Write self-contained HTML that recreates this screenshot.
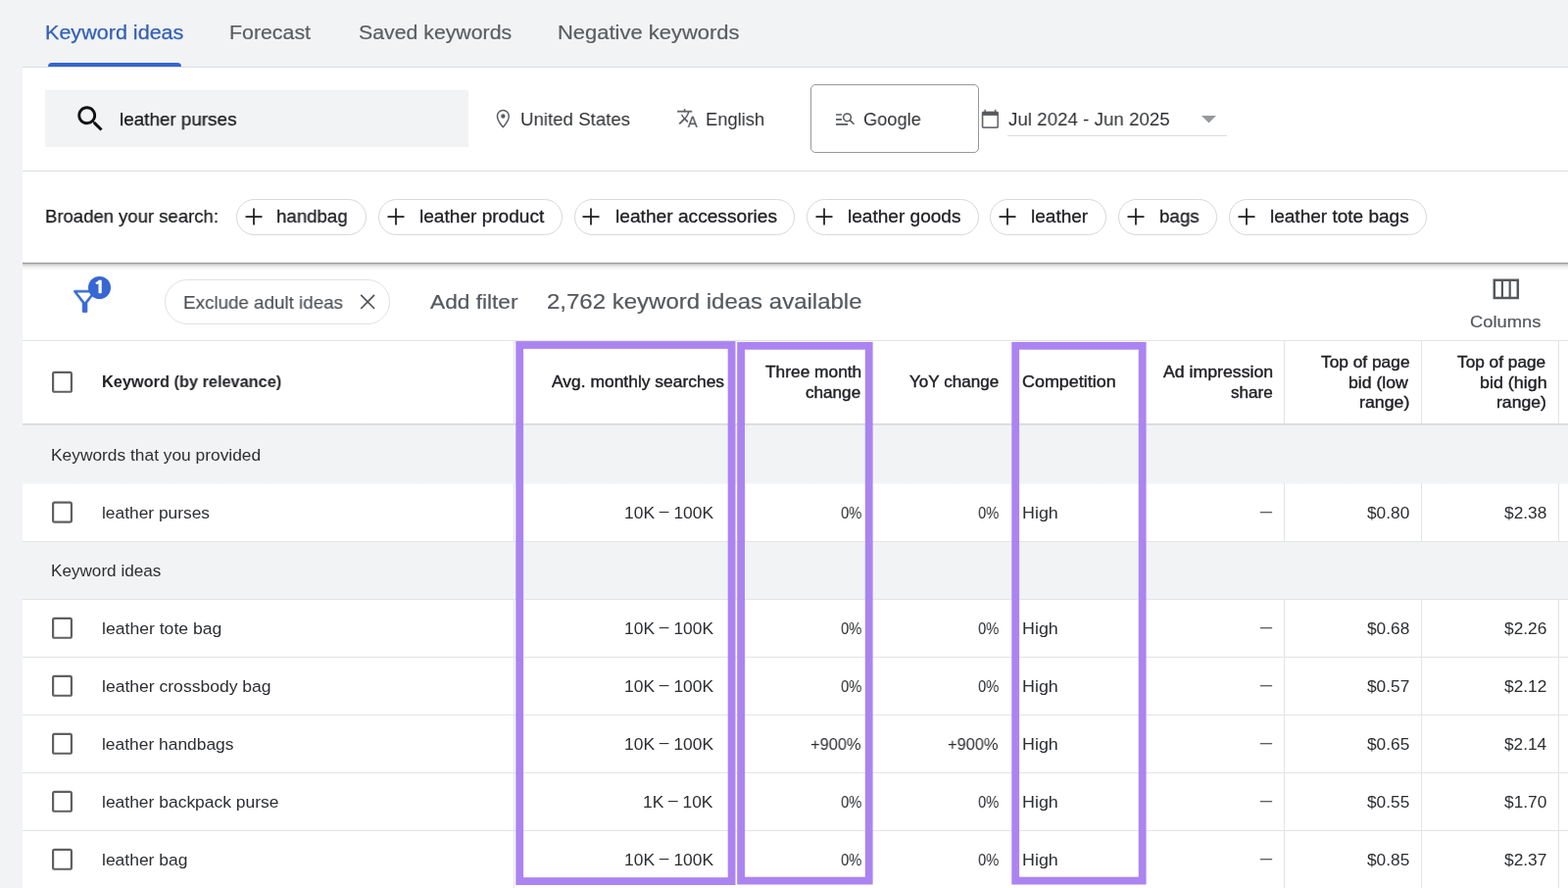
<!DOCTYPE html>
<html lang="en"><head><meta charset="utf-8"><title>Keyword ideas</title>
<style>
html,body{margin:0;padding:0}
body{width:1600px;height:906px;overflow:hidden;position:relative;background:#f1f3f4;font-family:"Liberation Sans", Arial, sans-serif;}
.a{position:absolute;box-sizing:border-box}
.t{position:absolute;white-space:nowrap;line-height:0;height:0;transform-origin:0 0;will-change:transform}
svg{position:absolute;display:block;overflow:visible}
.chip{position:absolute;box-sizing:border-box;border:1px solid #d6d8db;border-radius:20px;background:#fff}
.vl{position:absolute;width:1px;background:#e3e4e6}
.rl{position:absolute;left:23px;right:0;height:1px;background:#e3e4e6}

</style></head><body>
<div class="a" style="left:22.5px;top:69px;width:1577.5px;height:837px;background:#fff"></div>
<div class="a" style="left:23px;top:68px;width:1577px;height:1px;background:#dadce0"></div>
<div class="a" style="left:48.6px;top:63.9px;width:136.6px;height:4.6px;background:#3566cf;border-radius:4px 4px 0 0"></div>
<div class="a" style="left:46px;top:92px;width:432px;height:58px;background:#f1f3f4"></div>
<div class="a" style="left:827px;top:86px;width:172px;height:70px;border:1px solid #96989b;border-radius:5px"></div>
<div class="a" style="left:1028px;top:138px;width:224px;height:1px;background:#dadce0"></div>
<div class="a" style="left:23px;top:174px;width:1577px;height:1px;background:#dadce0"></div>
<div class="a" style="left:22.5px;top:267px;width:1577.5px;height:9px;background:linear-gradient(#efefef 0 1px,#9c9c9c 1px 2px,#c6c6c6 2px 3px,#dbdbdb 3px 4px,#e7e7e7 4px 5px,#efefef 5px 6px,#f5f5f5 6px 7px,#f9f9f9 7px 8px,#fcfcfc 8px 9px)"></div>
<div class="chip" style="left:241.25px;top:203.25px;width:132.5px;height:36.25px"></div>
<svg style="left:249.90px;top:211.50px" width="18" height="18" viewBox="0 0 18 18"><path d="M9 .5v17M.5 9h17" stroke="#1d1e20" stroke-width="1.75" fill="none"/></svg>
<div class="chip" style="left:386.25px;top:203.25px;width:187.64999999999998px;height:36.25px"></div>
<svg style="left:394.90px;top:211.50px" width="18" height="18" viewBox="0 0 18 18"><path d="M9 .5v17M.5 9h17" stroke="#1d1e20" stroke-width="1.75" fill="none"/></svg>
<div class="chip" style="left:585.75px;top:203.25px;width:225.25px;height:36.25px"></div>
<svg style="left:594.40px;top:211.50px" width="18" height="18" viewBox="0 0 18 18"><path d="M9 .5v17M.5 9h17" stroke="#1d1e20" stroke-width="1.75" fill="none"/></svg>
<div class="chip" style="left:823px;top:203.25px;width:176px;height:36.25px"></div>
<svg style="left:831.65px;top:211.50px" width="18" height="18" viewBox="0 0 18 18"><path d="M9 .5v17M.5 9h17" stroke="#1d1e20" stroke-width="1.75" fill="none"/></svg>
<div class="chip" style="left:1010.1px;top:203.25px;width:118.89999999999998px;height:36.25px"></div>
<svg style="left:1018.75px;top:211.50px" width="18" height="18" viewBox="0 0 18 18"><path d="M9 .5v17M.5 9h17" stroke="#1d1e20" stroke-width="1.75" fill="none"/></svg>
<div class="chip" style="left:1141px;top:203.25px;width:101.40000000000009px;height:36.25px"></div>
<svg style="left:1149.65px;top:211.50px" width="18" height="18" viewBox="0 0 18 18"><path d="M9 .5v17M.5 9h17" stroke="#1d1e20" stroke-width="1.75" fill="none"/></svg>
<div class="chip" style="left:1254px;top:203.25px;width:202px;height:36.25px"></div>
<svg style="left:1262.65px;top:211.50px" width="18" height="18" viewBox="0 0 18 18"><path d="M9 .5v17M.5 9h17" stroke="#1d1e20" stroke-width="1.75" fill="none"/></svg>
<div class="chip" style="left:168.2px;top:285.2px;width:229.5px;height:45.4px;border-radius:23px;border-color:#e0e1e3"></div>
<div class="rl" style="top:347px"></div>
<div class="a" style="left:23px;top:432px;width:1577px;height:2px;background:linear-gradient(#d4d6da,#e3e5e8)"></div>
<div class="a" style="left:22.5px;top:434px;width:1577.5px;height:59.6px;background:linear-gradient(#f1f3f4 58.2px,#f6f7f8 59.6px)"></div>
<div class="a" style="left:22.5px;top:553px;width:1577.5px;height:58px;background:#f1f3f4"></div>
<div class="rl" style="top:552px"></div>
<div class="rl" style="top:611px"></div>
<div class="rl" style="top:670px"></div>
<div class="rl" style="top:729px"></div>
<div class="rl" style="top:788px"></div>
<div class="rl" style="top:847px"></div>
<div class="vl" style="left:524px;top:348px;height:84px"></div>
<div class="vl" style="left:524px;top:493px;height:59px"></div>
<div class="vl" style="left:524px;top:612px;height:294px"></div>
<div class="vl" style="left:1310px;top:348px;height:84px"></div>
<div class="vl" style="left:1310px;top:493px;height:59px"></div>
<div class="vl" style="left:1310px;top:612px;height:294px"></div>
<div class="vl" style="left:1450px;top:348px;height:84px"></div>
<div class="vl" style="left:1450px;top:493px;height:59px"></div>
<div class="vl" style="left:1450px;top:612px;height:294px"></div>
<div class="vl" style="left:1590px;top:348px;height:84px"></div>
<div class="vl" style="left:1590px;top:493px;height:59px"></div>
<div class="vl" style="left:1590px;top:612px;height:294px"></div>
<svg style="left:0;top:0" width="120" height="906" viewBox="0 0 120 906"><rect x="54.1" y="379.85" width="18.8" height="19.9" rx="1.6" fill="#fff" stroke="#5e6062" stroke-width="2.2"/><rect x="54.1" y="512.65" width="18.8" height="19.9" rx="1.6" fill="#fff" stroke="#5e6062" stroke-width="2.2"/><rect x="54.1" y="630.85" width="18.8" height="19.9" rx="1.6" fill="#fff" stroke="#5e6062" stroke-width="2.2"/><rect x="54.1" y="689.85" width="18.8" height="19.9" rx="1.6" fill="#fff" stroke="#5e6062" stroke-width="2.2"/><rect x="54.1" y="748.85" width="18.8" height="19.9" rx="1.6" fill="#fff" stroke="#5e6062" stroke-width="2.2"/><rect x="54.1" y="807.85" width="18.8" height="19.9" rx="1.6" fill="#fff" stroke="#5e6062" stroke-width="2.2"/><rect x="54.1" y="866.85" width="18.8" height="19.9" rx="1.6" fill="#fff" stroke="#5e6062" stroke-width="2.2"/></svg>
<svg style="left:0;top:0" width="1600" height="906" viewBox="0 0 1600 906"><rect x="530.20" y="352.00" width="216.40" height="547.10" fill="none" stroke="#ab84f2" stroke-width="7.8"/><rect x="756.10" y="352.80" width="130.60" height="545.80" fill="none" stroke="#ab84f2" stroke-width="7.8"/><rect x="1036.20" y="352.80" width="129.50" height="545.80" fill="none" stroke="#ab84f2" stroke-width="7.8"/></svg>
<svg style="left:75.2px;top:104.3px" width="34.7" height="34.7" viewBox="0 0 24 24"><path fill="#111" d="M15.5 14h-.79l-.28-.27C15.41 12.59 16 11.11 16 9.5 16 5.91 13.09 3 9.5 3S3 5.91 3 9.5 5.91 16 9.5 16c1.61 0 3.09-.59 4.23-1.57l.27.28v.79l5 4.99L20.49 19l-4.99-5zm-6 0C7.01 14 5 11.99 5 9.5S7.01 5 9.5 5 14 7.01 14 9.5 11.99 14 9.5 14z"/></svg>
<svg style="left:502.0px;top:109.6px" width="22.7" height="22.7" viewBox="0 0 24 24"><path d="M12 2.75C8.55 2.75 5.75 5.55 5.75 9c0 4.8 6.25 11.9 6.25 11.9s6.25-7.1 6.25-11.9c0-3.45-2.8-6.25-6.25-6.25z" fill="none" stroke="#5a5d61" stroke-width="1.55" stroke-linejoin="round"/><circle cx="12" cy="9" r="2.3" fill="#5a5d61"/></svg>
<svg style="left:689.8px;top:109.3px" width="23.0" height="23.0" viewBox="0 0 24 24"><path fill="#55585c" stroke="#fff" stroke-width="0.35" d="M12.87 15.07l-2.54-2.51.03-.03c1.74-1.94 2.98-4.17 3.71-6.53H17V4h-7V2H8v2H1v1.99h11.17C11.5 7.92 10.44 9.75 9 11.35 8.07 10.32 7.3 9.19 6.69 8h-2c.73 1.63 1.73 3.17 2.98 4.56l-5.09 5.02L4 19l5-5 3.11 3.11.76-2.04zM18.5 10h-2L12 22h2l1.12-3h4.75L21 22h2l-4.5-12zm-2.62 7l1.62-4.33L19.12 17h-3.24z"/></svg>
<svg style="left:850px;top:110px" width="26" height="22" viewBox="850 110 26 22"><path d="M853 117h5.9M853 121.9h5.9M853 126.9h12" stroke="#55585c" stroke-width="1.6" fill="none"/><circle cx="864.5" cy="119.8" r="3.85" stroke="#55585c" stroke-width="1.5" fill="none"/><path d="M867.3 122.6l4.2 4.2" stroke="#55585c" stroke-width="1.6" fill="none"/></svg>
<svg style="left:1000.3px;top:110.7px" width="20.8" height="20.8" viewBox="0 0 24 24"><path fill="#55585c" stroke="#fff" stroke-width="0.3" d="M20 3h-1V1h-2v2H7V1H5v2H4c-1.1 0-2 .9-2 2v16c0 1.1.9 2 2 2h16c1.1 0 2-.9 2-2V5c0-1.1-.9-2-2-2zm0 18H4V8h16v13z"/></svg>
<svg style="left:1226.2px;top:118px" width="15" height="8" viewBox="0 0 15 8"><path d="M0 0h15L7.5 7.6z" fill="#96999d"/></svg>
<svg style="left:69.2px;top:290.1px" width="35.2" height="35.2" viewBox="0 0 24 24"><path fill="#3a6bd4" stroke="#fff" stroke-width="0.3" d="M7 6h10l-5.01 6.3L7 6zm-2.75-.39C6.27 8.2 10 13 10 13v6c0 .55.45 1 1 1h2c.55 0 1-.45 1-1v-6s3.72-4.8 5.74-7.39c.51-.66.04-1.61-.79-1.61H5.04c-.83 0-1.3.95-.79 1.61z"/></svg>
<div class="a" style="left:90.1px;top:281.6px;width:23px;height:23px;border-radius:50%;background:#3667d2"></div>
<svg style="left:366px;top:299px" width="18" height="18" viewBox="366 299 18 18"><path d="M368.7 301.4l12.9 13.1M381.6 301.4l-12.9 13.1" stroke="#4d5054" stroke-width="1.65" stroke-linecap="round" fill="none"/></svg>
<svg style="left:1523px;top:284px" width="28" height="22" viewBox="1523 284 28 22"><rect x="1524.8" y="285.8" width="24" height="18.2" fill="none" stroke="#55585c" stroke-width="2.5"/><path d="M1532.9 285v20M1540.7 285v20" stroke="#55585c" stroke-width="2.2" fill="none"/></svg>
<span class="t" style="left:46.29px;top:33px;font-size:20.1px;color:#3460b6;-webkit-text-stroke:0.25px #3460b6;transform:scaleX(1.0728)">Keyword ideas</span>
<span class="t" style="left:234.41px;top:33px;font-size:20.1px;color:#5a5d61;-webkit-text-stroke:0.2px #5a5d61;transform:scaleX(1.0614)">Forecast</span>
<span class="t" style="left:366.01px;top:33px;font-size:20.1px;color:#5a5d61;-webkit-text-stroke:0.2px #5a5d61;transform:scaleX(1.0589)">Saved keywords</span>
<span class="t" style="left:568.86px;top:33px;font-size:20.1px;color:#5a5d61;-webkit-text-stroke:0.2px #5a5d61;transform:scaleX(1.0931)">Negative keywords</span>
<span class="t" style="left:121.66px;top:122px;font-size:19.0px;color:#141516;-webkit-text-stroke:0.25px #141516;transform:scaleX(0.9924)">leather purses</span>
<span class="t" style="left:531.13px;top:122px;font-size:19.0px;color:#2c2e31;transform:scaleX(0.9826)">United States</span>
<span class="t" style="left:719.75px;top:122px;font-size:19.0px;color:#2c2e31;transform:scaleX(0.9647)">English</span>
<span class="t" style="left:880.94px;top:122px;font-size:19.0px;color:#2c2e31;transform:scaleX(0.9597)">Google</span>
<span class="t" style="left:1029.15px;top:122px;font-size:19.0px;color:#2c2e31;transform:scaleX(0.9870)">Jul 2024 - Jun 2025</span>
<span class="t" style="left:45.99px;top:221px;font-size:19.0px;color:#17181a;-webkit-text-stroke:0.25px #17181a;transform:scaleX(0.9739)">Broaden your search:</span>
<span class="t" style="left:282.47px;top:221px;font-size:19.0px;color:#202124;-webkit-text-stroke:0.3px #202124;transform:scaleX(0.9818)">handbag</span>
<span class="t" style="left:427.70px;top:221px;font-size:19.0px;color:#202124;-webkit-text-stroke:0.3px #202124;transform:scaleX(1.0044)">leather product</span>
<span class="t" style="left:627.69px;top:221px;font-size:19.0px;color:#202124;-webkit-text-stroke:0.3px #202124;transform:scaleX(1.0083)">leather accessories</span>
<span class="t" style="left:864.70px;top:221px;font-size:19.0px;color:#202124;-webkit-text-stroke:0.3px #202124;transform:scaleX(1.0026)">leather goods</span>
<span class="t" style="left:1052.20px;top:221px;font-size:19.0px;color:#202124;-webkit-text-stroke:0.3px #202124;transform:scaleX(1.0018)">leather</span>
<span class="t" style="left:1182.71px;top:221px;font-size:19.0px;color:#202124;-webkit-text-stroke:0.3px #202124;transform:scaleX(0.9862)">bags</span>
<span class="t" style="left:1295.90px;top:221px;font-size:19.0px;color:#202124;-webkit-text-stroke:0.3px #202124;transform:scaleX(1.0007)">leather tote bags</span>
<span class="t" style="left:186.92px;top:309px;font-size:19.0px;color:#4d5054;-webkit-text-stroke:0.15px #4d5054;transform:scaleX(0.9892)">Exclude adult ideas</span>
<span class="t" style="left:439.30px;top:308px;font-size:20.4px;color:#55585c;-webkit-text-stroke:0.2px #55585c;transform:scaleX(1.1128)">Add filter</span>
<span class="t" style="left:558.25px;top:307px;font-size:22.9px;color:#55585c;-webkit-text-stroke:0.2px #55585c;transform:scaleX(1.0484)">2,762 keyword ideas available</span>
<span class="t" style="left:1500.37px;top:329px;font-size:16.6px;color:#55585c;-webkit-text-stroke:0.2px #55585c;transform:scaleX(1.1051)">Columns</span>
<span class="t" style="left:94.82px;top:293px;font-size:17.6px;color:#fff;font-weight:700;-webkit-text-stroke:0.5px #fff;font-family:NanumGothic,sans-serif;transform:scaleX(1.2400)">1</span>
<span class="t" style="left:104.10px;top:389px;font-size:16.4px;color:#202124;font-weight:700;transform:scaleX(0.9959)">Keyword (by relevance)</span>
<span class="t" style="left:562.67px;top:389px;font-size:16.4px;color:#202124;-webkit-text-stroke:0.38px #202124;transform:scaleX(1.0638)">Avg. monthly searches</span>
<span class="t" style="left:780.74px;top:379px;font-size:16.4px;color:#202124;-webkit-text-stroke:0.38px #202124;transform:scaleX(1.0572)">Three month</span>
<span class="t" style="left:822.38px;top:400px;font-size:16.4px;color:#202124;-webkit-text-stroke:0.38px #202124;transform:scaleX(1.0445)">change</span>
<span class="t" style="left:927.70px;top:389px;font-size:16.4px;color:#202124;-webkit-text-stroke:0.38px #202124;transform:scaleX(1.0414)">YoY change</span>
<span class="t" style="left:1042.98px;top:389px;font-size:16.4px;color:#202124;-webkit-text-stroke:0.38px #202124;transform:scaleX(1.0939)">Competition</span>
<span class="t" style="left:1186.57px;top:379px;font-size:16.4px;color:#202124;-webkit-text-stroke:0.38px #202124;transform:scaleX(1.0799)">Ad impression</span>
<span class="t" style="left:1255.74px;top:400px;font-size:16.4px;color:#202124;-webkit-text-stroke:0.38px #202124;transform:scaleX(1.0435)">share</span>
<span class="t" style="left:1347.54px;top:369px;font-size:16.4px;color:#202124;-webkit-text-stroke:0.38px #202124;transform:scaleX(1.0565)">Top of page</span>
<span class="t" style="left:1376.49px;top:390px;font-size:16.4px;color:#202124;-webkit-text-stroke:0.38px #202124;transform:scaleX(1.0768)">bid (low</span>
<span class="t" style="left:1387.11px;top:410px;font-size:16.4px;color:#202124;-webkit-text-stroke:0.38px #202124;transform:scaleX(1.0857)">range)</span>
<span class="t" style="left:1487.34px;top:369px;font-size:16.4px;color:#202124;-webkit-text-stroke:0.38px #202124;transform:scaleX(1.0529)">Top of page</span>
<span class="t" style="left:1509.68px;top:390px;font-size:16.4px;color:#202124;-webkit-text-stroke:0.38px #202124;transform:scaleX(1.0906)">bid (high</span>
<span class="t" style="left:1527.23px;top:410px;font-size:16.4px;color:#202124;-webkit-text-stroke:0.38px #202124;transform:scaleX(1.0725)">range)</span>
<span class="t" style="left:52.08px;top:465px;font-size:17.1px;color:#2c2e31;transform:scaleX(1.0151)">Keywords that you provided</span>
<span class="t" style="left:52.10px;top:583px;font-size:17.1px;color:#2c2e31;transform:scaleX(1.0018)">Keyword ideas</span>
<span class="t" style="left:104.13px;top:524px;font-size:17.1px;color:#2c2e31;transform:scaleX(1.0160)">leather purses</span>
<span class="t" style="left:636.73px;top:524px;font-size:17.1px;color:#2c2e31;transform:scaleX(1.0199)">10K <span style="position:relative;top:-2.4px">–</span> 100K</span>
<span class="t" style="left:857.65px;top:524px;font-size:17.1px;color:#2c2e31;transform:scaleX(0.8602)">0%</span>
<span class="t" style="left:997.65px;top:524px;font-size:17.1px;color:#2c2e31;transform:scaleX(0.8602)">0%</span>
<span class="t" style="left:1042.68px;top:524px;font-size:17.1px;color:#2c2e31;transform:scaleX(1.0462)">High</span>
<span class="t" style="left:1285.90px;top:522px;font-size:17.1px;color:#5c5f63;-webkit-text-stroke:0.2px #5c5f63;transform:scaleX(0.6957)">—</span>
<span class="t" style="left:1395.05px;top:524px;font-size:17.1px;color:#2c2e31;transform:scaleX(1.0108)">$0.80</span>
<span class="t" style="left:1534.95px;top:524px;font-size:17.1px;color:#2c2e31;transform:scaleX(1.0132)">$2.38</span>
<span class="t" style="left:104.11px;top:642px;font-size:17.1px;color:#2c2e31;transform:scaleX(1.0300)">leather tote bag</span>
<span class="t" style="left:636.73px;top:642px;font-size:17.1px;color:#2c2e31;transform:scaleX(1.0199)">10K <span style="position:relative;top:-2.4px">–</span> 100K</span>
<span class="t" style="left:857.65px;top:642px;font-size:17.1px;color:#2c2e31;transform:scaleX(0.8602)">0%</span>
<span class="t" style="left:997.65px;top:642px;font-size:17.1px;color:#2c2e31;transform:scaleX(0.8602)">0%</span>
<span class="t" style="left:1042.68px;top:642px;font-size:17.1px;color:#2c2e31;transform:scaleX(1.0462)">High</span>
<span class="t" style="left:1285.90px;top:640px;font-size:17.1px;color:#5c5f63;-webkit-text-stroke:0.2px #5c5f63;transform:scaleX(0.6957)">—</span>
<span class="t" style="left:1395.05px;top:642px;font-size:17.1px;color:#2c2e31;transform:scaleX(1.0108)">$0.68</span>
<span class="t" style="left:1534.95px;top:642px;font-size:17.1px;color:#2c2e31;transform:scaleX(1.0132)">$2.26</span>
<span class="t" style="left:104.12px;top:701px;font-size:17.1px;color:#2c2e31;transform:scaleX(1.0262)">leather crossbody bag</span>
<span class="t" style="left:636.73px;top:701px;font-size:17.1px;color:#2c2e31;transform:scaleX(1.0199)">10K <span style="position:relative;top:-2.4px">–</span> 100K</span>
<span class="t" style="left:857.65px;top:701px;font-size:17.1px;color:#2c2e31;transform:scaleX(0.8602)">0%</span>
<span class="t" style="left:997.65px;top:701px;font-size:17.1px;color:#2c2e31;transform:scaleX(0.8602)">0%</span>
<span class="t" style="left:1042.68px;top:701px;font-size:17.1px;color:#2c2e31;transform:scaleX(1.0462)">High</span>
<span class="t" style="left:1285.90px;top:699px;font-size:17.1px;color:#5c5f63;-webkit-text-stroke:0.2px #5c5f63;transform:scaleX(0.6957)">—</span>
<span class="t" style="left:1395.05px;top:701px;font-size:17.1px;color:#2c2e31;transform:scaleX(1.0108)">$0.57</span>
<span class="t" style="left:1534.95px;top:701px;font-size:17.1px;color:#2c2e31;transform:scaleX(1.0132)">$2.12</span>
<span class="t" style="left:104.13px;top:760px;font-size:17.1px;color:#2c2e31;transform:scaleX(1.0180)">leather handbags</span>
<span class="t" style="left:636.73px;top:760px;font-size:17.1px;color:#2c2e31;transform:scaleX(1.0199)">10K <span style="position:relative;top:-2.4px">–</span> 100K</span>
<span class="t" style="left:827.48px;top:760px;font-size:17.1px;color:#2c2e31;transform:scaleX(0.9589)">+900%</span>
<span class="t" style="left:967.48px;top:760px;font-size:17.1px;color:#2c2e31;transform:scaleX(0.9589)">+900%</span>
<span class="t" style="left:1042.68px;top:760px;font-size:17.1px;color:#2c2e31;transform:scaleX(1.0462)">High</span>
<span class="t" style="left:1285.90px;top:758px;font-size:17.1px;color:#5c5f63;-webkit-text-stroke:0.2px #5c5f63;transform:scaleX(0.6957)">—</span>
<span class="t" style="left:1395.05px;top:760px;font-size:17.1px;color:#2c2e31;transform:scaleX(1.0108)">$0.65</span>
<span class="t" style="left:1534.95px;top:760px;font-size:17.1px;color:#2c2e31;transform:scaleX(1.0071)">$2.14</span>
<span class="t" style="left:104.12px;top:819px;font-size:17.1px;color:#2c2e31;transform:scaleX(1.0215)">leather backpack purse</span>
<span class="t" style="left:656.43px;top:819px;font-size:17.1px;color:#2c2e31;transform:scaleX(1.0153)">1K <span style="position:relative;top:-2.4px">–</span> 10K</span>
<span class="t" style="left:857.65px;top:819px;font-size:17.1px;color:#2c2e31;transform:scaleX(0.8602)">0%</span>
<span class="t" style="left:997.65px;top:819px;font-size:17.1px;color:#2c2e31;transform:scaleX(0.8602)">0%</span>
<span class="t" style="left:1042.68px;top:819px;font-size:17.1px;color:#2c2e31;transform:scaleX(1.0462)">High</span>
<span class="t" style="left:1285.90px;top:817px;font-size:17.1px;color:#5c5f63;-webkit-text-stroke:0.2px #5c5f63;transform:scaleX(0.6957)">—</span>
<span class="t" style="left:1395.05px;top:819px;font-size:17.1px;color:#2c2e31;transform:scaleX(1.0108)">$0.55</span>
<span class="t" style="left:1534.95px;top:819px;font-size:17.1px;color:#2c2e31;transform:scaleX(1.0132)">$1.70</span>
<span class="t" style="left:104.12px;top:878px;font-size:17.1px;color:#2c2e31;transform:scaleX(1.0222)">leather bag</span>
<span class="t" style="left:636.73px;top:878px;font-size:17.1px;color:#2c2e31;transform:scaleX(1.0199)">10K <span style="position:relative;top:-2.4px">–</span> 100K</span>
<span class="t" style="left:857.65px;top:878px;font-size:17.1px;color:#2c2e31;transform:scaleX(0.8602)">0%</span>
<span class="t" style="left:997.65px;top:878px;font-size:17.1px;color:#2c2e31;transform:scaleX(0.8602)">0%</span>
<span class="t" style="left:1042.68px;top:878px;font-size:17.1px;color:#2c2e31;transform:scaleX(1.0462)">High</span>
<span class="t" style="left:1285.90px;top:876px;font-size:17.1px;color:#5c5f63;-webkit-text-stroke:0.2px #5c5f63;transform:scaleX(0.6957)">—</span>
<span class="t" style="left:1395.05px;top:878px;font-size:17.1px;color:#2c2e31;transform:scaleX(1.0108)">$0.85</span>
<span class="t" style="left:1534.95px;top:878px;font-size:17.1px;color:#2c2e31;transform:scaleX(1.0132)">$2.37</span>
</body></html>
